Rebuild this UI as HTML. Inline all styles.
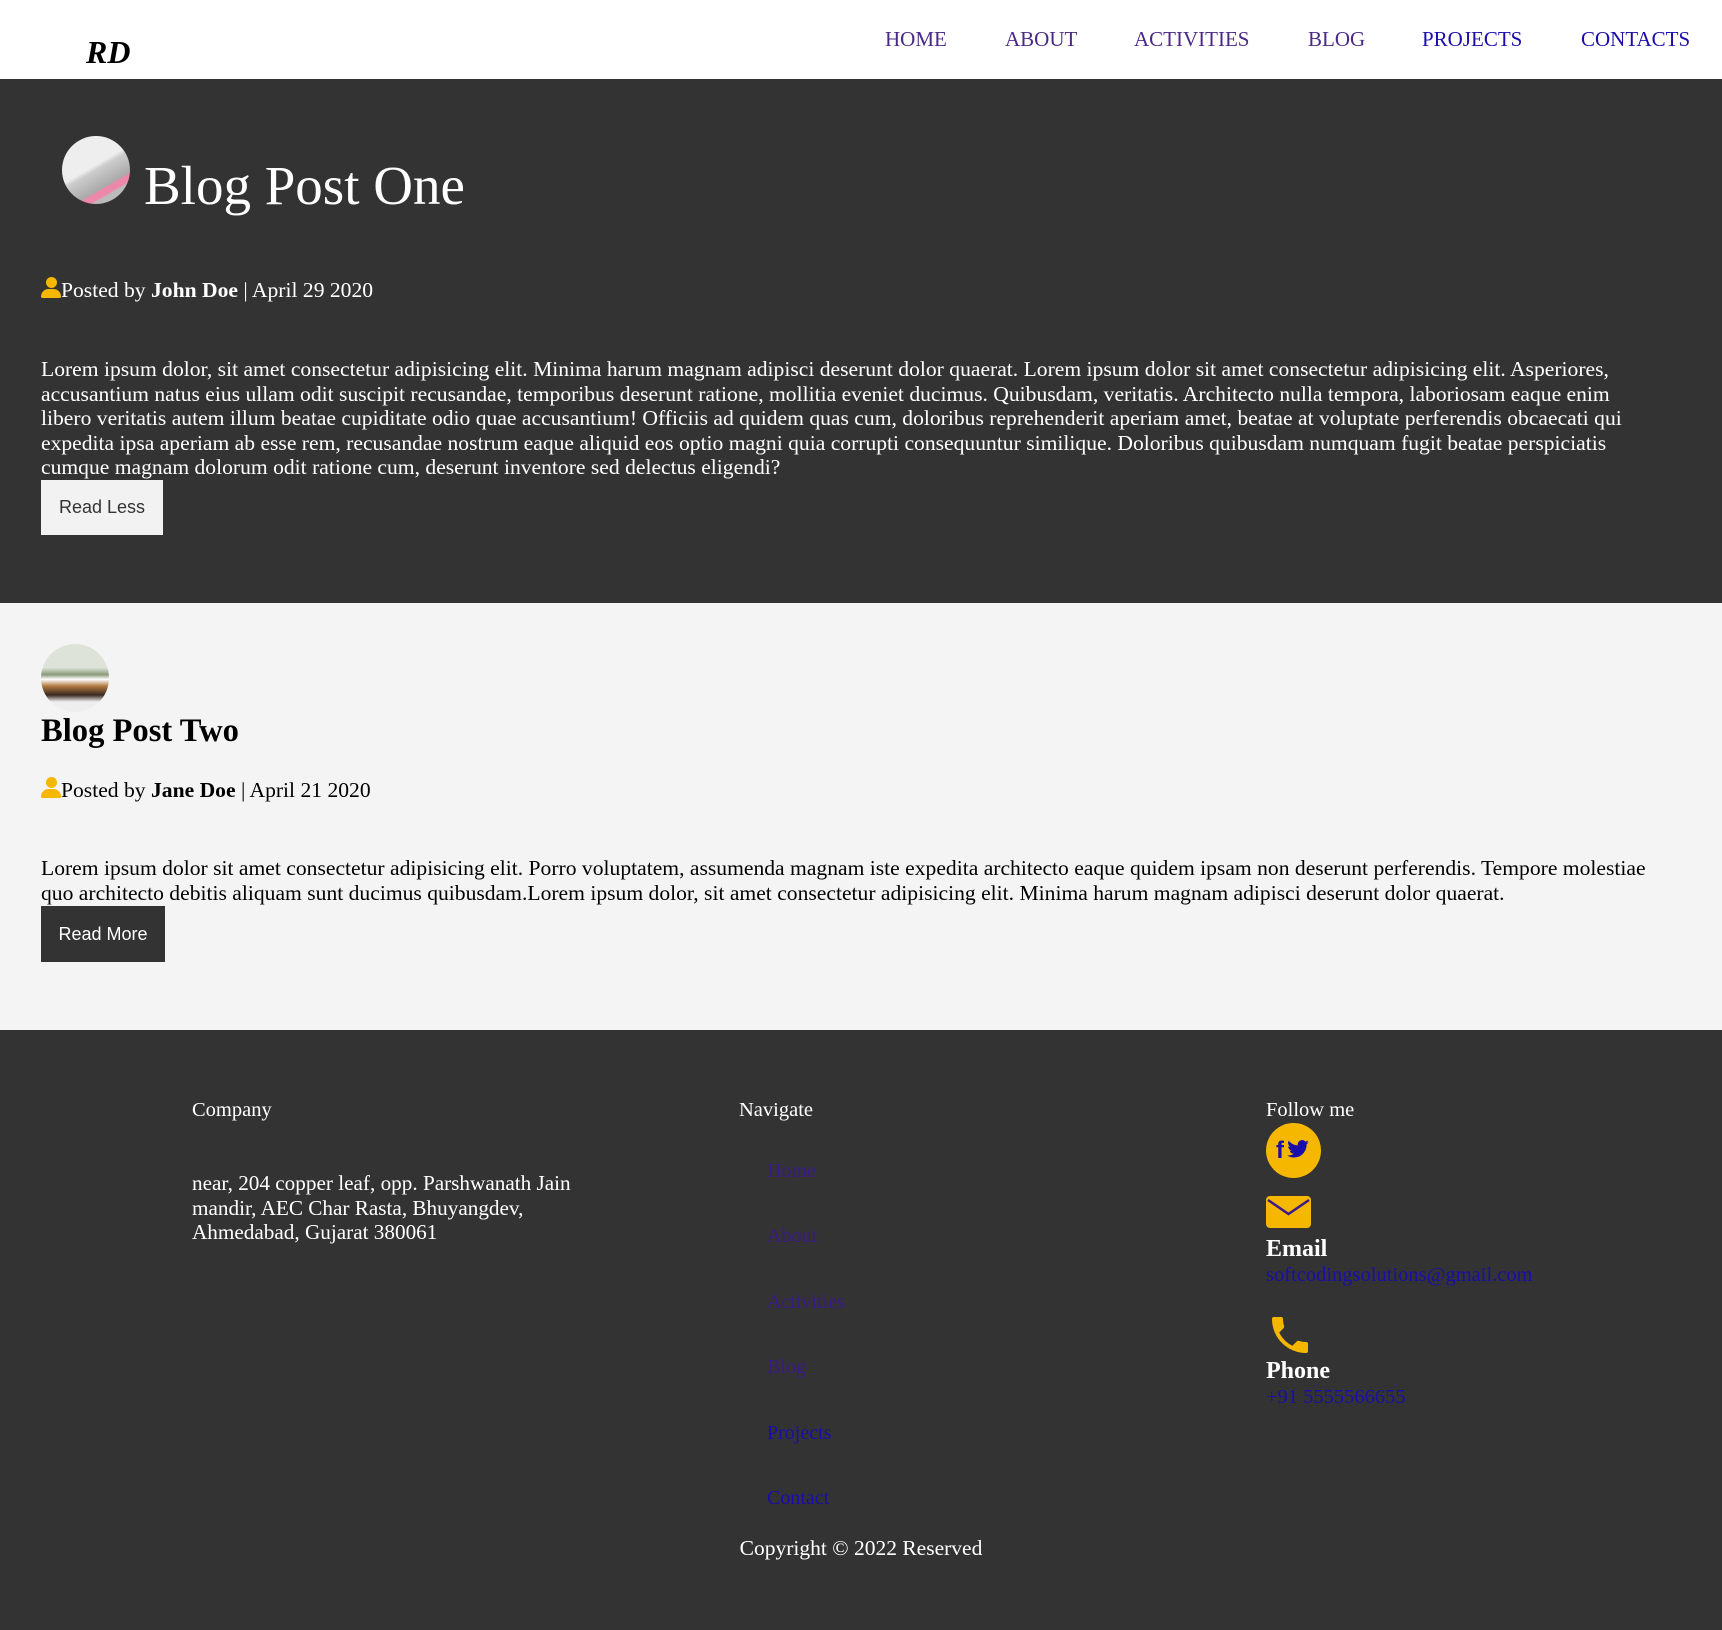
<!DOCTYPE html>
<html><head><meta charset="utf-8"><style>
*{margin:0;padding:0;box-sizing:border-box}
body{width:1722px;height:1630px;position:relative;font-family:"Liberation Serif",serif;background:#333;overflow:hidden}
.a{position:absolute;white-space:nowrap}
header{position:absolute;left:0;top:0;width:1722px;height:79px;background:#fff}
nav span{position:absolute;top:26px;font-size:21px;color:#4b2a87}
.blue{color:#1a0dab!important}
.p{font-size:21.6px;line-height:24.5px}
.meta{font-size:21.6px}
.user{display:inline-block;width:20px;height:22px;position:relative;vertical-align:-2px}
.user:before{content:"";position:absolute;left:5px;top:0;width:11px;height:11px;border-radius:50%;background:#f5b700}
.user:after{content:"";position:absolute;left:0;top:12px;width:20px;height:9px;border-radius:10px 10px 2px 2px;background:#f5b700}
.fl{font-size:20px;color:#3a1a8a}
</style></head><body>
<header>
<div class="a" style="left:86px;top:34px;font-size:32px;font-weight:bold;font-style:italic;color:#000">RD</div>
<nav>
<span style="left:885px;top:27px">HOME</span>
<span style="left:1005px;top:27px">ABOUT</span>
<span style="left:1134px;top:27px">ACTIVITIES</span>
<span style="left:1308px;top:27px">BLOG</span>
<span style="left:1422px;top:27px" class="blue">PROJECTS</span>
<span style="left:1581px;top:27px" class="blue">CONTACTS</span>
</nav>
</header>
<div style="position:absolute;left:0;top:79px;width:1722px;height:524px;background:#333"></div>
<div class="a" style="left:62px;top:136px;width:68px;height:68px;border-radius:50%;background:linear-gradient(150deg,#555 0 12%,#eee 14% 45%,#ccc 50%,#aaa 70%,#e8a 72% 78%,#bbb 80%)"></div>
<div class="a" style="left:144px;top:154px;font-size:55px;color:#fff">Blog Post One</div>
<div class="a meta" style="left:41px;top:277px;color:#fff"><span class="user"></span>Posted by <b>John Doe</b> | April 29 2020</div>
<div class="a p" style="left:41px;top:357px;color:#fff">Lorem ipsum dolor, sit amet consectetur adipisicing elit. Minima harum magnam adipisci deserunt dolor quaerat. Lorem ipsum dolor sit amet consectetur adipisicing elit. Asperiores,<br>accusantium natus eius ullam odit suscipit recusandae, temporibus deserunt ratione, mollitia eveniet ducimus. Quibusdam, veritatis. Architecto nulla tempora, laboriosam eaque enim<br>libero veritatis autem illum beatae cupiditate odio quae accusantium! Officiis ad quidem quas cum, doloribus reprehenderit aperiam amet, beatae at voluptate perferendis obcaecati qui<br>expedita ipsa aperiam ab esse rem, recusandae nostrum eaque aliquid eos optio magni quia corrupti consequuntur similique. Doloribus quibusdam numquam fugit beatae perspiciatis<br>cumque magnam dolorum odit ratione cum, deserunt inventore sed delectus eligendi?</div>
<div class="a" style="left:41px;top:480px;width:122px;height:55px;background:#f2f2f2;font-family:'Liberation Sans',sans-serif;font-size:18px;color:#333;line-height:55px;text-align:center">Read Less</div>

<div style="position:absolute;left:0;top:603px;width:1722px;height:427px;background:#f4f4f4"></div>
<div class="a" style="left:41px;top:644px;width:68px;height:68px;border-radius:50%;background:linear-gradient(180deg,#dde3d8 0 35%,#8a9a7a 45%,#fff 52%,#b07840 62%,#3a2a20 75%,#eee 85%)"></div>
<div class="a" style="left:41px;top:713px;font-size:32.6px;font-weight:bold;color:#000">Blog Post Two</div>
<div class="a meta" style="left:41px;top:777px;color:#000"><span class="user"></span>Posted by <b>Jane Doe</b> | April 21 2020</div>
<div class="a p" style="left:41px;top:856px;color:#000">Lorem ipsum dolor sit amet consectetur adipisicing elit. Porro voluptatem, assumenda magnam iste expedita architecto eaque quidem ipsam non deserunt perferendis. Tempore molestiae<br>quo architecto debitis aliquam sunt ducimus quibusdam.Lorem ipsum dolor, sit amet consectetur adipisicing elit. Minima harum magnam adipisci deserunt dolor quaerat.</div>
<div class="a" style="left:41px;top:906px;width:124px;height:56px;background:#333;font-family:'Liberation Sans',sans-serif;font-size:18px;color:#fff;line-height:56px;text-align:center">Read More</div>

<div class="a" style="left:192px;top:1099px;font-size:20.5px;color:#fff">Company</div>
<div class="a" style="left:192px;top:1171px;font-size:21.2px;line-height:24.5px;color:#fff">near, 204 copper leaf, opp. Parshwanath Jain<br>mandir, AEC Char Rasta, Bhuyangdev,<br>Ahmedabad, Gujarat 380061</div>
<div class="a" style="left:739px;top:1099px;font-size:20.5px;color:#fff">Navigate</div>
<div class="a fl" style="left:767px;top:1160px">Home</div>
<div class="a fl" style="left:767px;top:1225px">About</div>
<div class="a fl" style="left:767px;top:1291px">Activities</div>
<div class="a fl" style="left:767px;top:1356px">Blog</div>
<div class="a fl blue" style="left:767px;top:1422px">Projects</div>
<div class="a fl blue" style="left:767px;top:1487px">Contact</div>
<div class="a" style="left:1266px;top:1099px;font-size:20.5px;color:#fff">Follow me</div>
<div class="a" style="left:1266px;top:1123px;width:55px;height:55px;border-radius:50%;background:#f5b700;color:#1a0dab;font-family:'Liberation Sans',sans-serif;font-weight:bold;font-size:24px;line-height:55px;padding-left:10px">f<svg width="22" height="18" viewBox="0 0 24 20" style="margin-left:3px"><path fill="#1a0dab" d="M24 2.4a10 10 0 0 1-2.8.8A5 5 0 0 0 23.3.5a10 10 0 0 1-3.1 1.2A4.9 4.9 0 0 0 11.8 6 14 14 0 0 1 1.7.9a4.9 4.9 0 0 0 1.5 6.6 4.9 4.9 0 0 1-2.2-.6 4.9 4.9 0 0 0 3.9 4.8 5 5 0 0 1-2.2.1 4.9 4.9 0 0 0 4.6 3.4A9.9 9.9 0 0 1 0 17.2 14 14 0 0 0 7.5 19.4c9.1 0 14-7.5 14-14v-.6A10 10 0 0 0 24 2.4z"/></svg></div>
<svg class="a" style="left:1266px;top:1196px" width="45" height="32" viewBox="0 0 45 32"><rect x="0" y="0" width="45" height="32" rx="4" fill="#f5b700"/><path d="M2 4l20.5 14L43 4" fill="none" stroke="#3a1a8a" stroke-width="2.5"/></svg>
<div class="a" style="left:1266px;top:1236px;font-size:24px;font-weight:bold;color:#fff">Email</div>
<div class="a" style="left:1266px;top:1264px;font-size:20.5px;color:#1a0dab">softcodingsolutions@gmail.com</div>
<svg class="a" style="left:1266px;top:1311px" width="48" height="48" viewBox="0 0 24 24"><path fill="#f5b700" d="M6.6 10.8a15 15 0 0 0 6.6 6.6l2.2-2.2a1 1 0 0 1 1-.25 11.4 11.4 0 0 0 3.6.57 1 1 0 0 1 1 1V20a1 1 0 0 1-1 1A17 17 0 0 1 3 4a1 1 0 0 1 1-1h3.5a1 1 0 0 1 1 1c0 1.25.2 2.45.57 3.57a1 1 0 0 1-.25 1z"/></svg>
<div class="a" style="left:1266px;top:1358px;font-size:24px;font-weight:bold;color:#fff">Phone</div>
<div class="a" style="left:1266px;top:1386px;font-size:20.5px;color:#1a0dab">+91 5555566655</div>
<div class="a" style="left:0;width:1722px;text-align:center;top:1536px;font-size:21.5px;color:#fff">Copyright © 2022 Reserved</div>
</body></html>
